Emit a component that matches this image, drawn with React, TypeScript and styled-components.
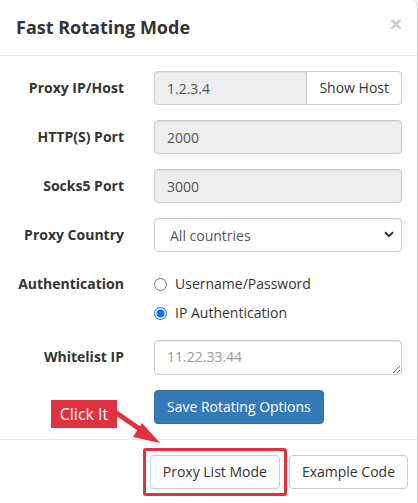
import React from "react";
import styled, { createGlobalStyle } from "styled-components";

const Global = createGlobalStyle`
  html, body { margin: 0; padding: 0; background: #fff; }
  body { font-family: "Open Sans", "Liberation Sans", sans-serif; font-size: 14px; color: #333; }
  * { box-sizing: border-box; }
`;

const Modal = styled.div`
  position: relative;
  width: 418px;
  height: 503px;
  overflow: hidden;
  background: #fff;
  border-right: 1px solid rgba(0, 0, 0, 0.2);
  border-top-right-radius: 6px;
`;

const Header = styled.div`
  display: flex;
  justify-content: space-between;
  align-items: flex-start;
  padding: 15px 15px 15px 16px;
  border-bottom: 1px solid #e5e5e5;
  height: 56px;
`;

const Title = styled.h4`
  margin: 0;
  font-size: 18px;
  font-weight: 700;
  line-height: 25px;
  color: #333;
`;

const Close = styled.button`
  border: 0;
  background: transparent;
  padding: 0;
  margin-top: -2px;
  font-family: "Liberation Sans", sans-serif;
  font-size: 21px;
  font-weight: 700;
  line-height: 1;
  color: #000;
  opacity: 0.2;
  cursor: pointer;
`;

const Body = styled.div`
  padding: 15px 15px 15px 16px;
`;

const FormRow = styled.div<{ $last?: boolean }>`
  display: grid;
  grid-template-columns: 108px 1fr;
  column-gap: 30px;
  margin-bottom: ${(p) => (p.$last ? "0" : "15px")};
`;

const Label = styled.label`
  text-align: right;
  font-weight: 700;
  font-size: 14px;
  line-height: 20px;
  padding-top: 7px;
  color: #333;
`;

const Control = styled.input`
  width: 100%;
  height: 34px;
  padding: 6px 12px;
  font-family: inherit;
  font-size: 14px;
  line-height: 20px;
  color: #555;
  background: #eee;
  border: 1px solid #ccc;
  border-radius: 4px;
  box-shadow: inset 0 1px 1px rgba(0, 0, 0, 0.075);
  outline: none;
`;

const InputGroup = styled.div`
  display: flex;
  & > ${Control} {
    border-radius: 4px 0 0 4px;
    flex: 1;
    min-width: 0;
  }
`;

const Button = styled.button<{ $primary?: boolean; $highlighted?: boolean; $attached?: boolean }>`
  position: relative;
  height: 34px;
  padding: 6px 12px;
  font-family: inherit;
  font-size: 14px;
  line-height: 20px;
  white-space: nowrap;
  cursor: pointer;
  color: ${(p) => (p.$primary ? "#fff" : "#333")};
  background: ${(p) => (p.$primary ? "#337ab7" : "#fff")};
  border: 1px solid ${(p) => (p.$primary ? "#2e6da4" : "#ccc")};
  border-radius: ${(p) => (p.$attached ? "0 4px 4px 0" : "4px")};
  margin-left: ${(p) => (p.$attached ? "-1px" : "0")};
  outline: none;
  &::after {
    content: "";
    display: ${(p) => (p.$highlighted ? "block" : "none")};
    position: absolute;
    inset: -8px;
    border: 3px solid #e03140;
    border-radius: 3px;
    pointer-events: none;
  }
`;

const SelectWrap = styled.div`
  position: relative;
`;

const Select = styled.select`
  width: 100%;
  height: 34px;
  padding: 6px 12px 6px 15px;
  font-family: inherit;
  font-size: 14px;
  color: #555;
  background: #fff;
  border: 1px solid #ccc;
  border-radius: 4px;
  box-shadow: inset 0 1px 1px rgba(0, 0, 0, 0.075);
  appearance: none;
  outline: none;
`;

const Chevron = styled.svg`
  position: absolute;
  right: 8px;
  top: 13px;
  pointer-events: none;
`;

const RadioList = styled.div`
  display: flex;
  flex-direction: column;
  padding-bottom: 2px;
`;

const RadioOption = styled.label<{ $first?: boolean }>`
  display: flex;
  align-items: center;
  gap: 8px;
  line-height: 20px;
  font-size: 14px;
  color: #333;
  padding-top: ${(p) => (p.$first ? "7px" : "0")};
  margin-top: ${(p) => (p.$first ? "0" : "9px")};
  input {
    margin: 0;
    width: 13px;
    height: 13px;
  }
`;

const TextArea = styled.textarea`
  width: 100%;
  height: 35px;
  padding: 6px 12px;
  font-family: inherit;
  font-size: 14px;
  line-height: 20px;
  color: #555;
  background: #fff;
  border: 1px solid #ccc;
  border-radius: 4px;
  box-shadow: inset 0 1px 1px rgba(0, 0, 0, 0.075);
  resize: vertical;
  display: block;
  outline: none;
  &::placeholder { color: #999; }
`;

const Footer = styled.div`
  display: flex;
  justify-content: flex-end;
  gap: 9px;
  padding: 15px 9px 15px 15px;
  border-top: 1px solid #e5e5e5;
`;

const Callout = styled.div`
  position: absolute;
  left: 51px;
  top: 400px;
  width: 66px;
  height: 28px;
  background: #e03140;
  color: #fff;
  font-size: 16px;
  line-height: 28px;
  text-align: center;
`;

const Arrow = styled.svg`
  position: absolute;
  left: 112px;
  top: 406px;
`;

export default function App() {
  return (
    <>
      <Global />
      <Modal>
        <Header>
          <Title>Fast Rotating Mode</Title>
          <Close aria-label="Close">×</Close>
        </Header>
        <Body>
          <FormRow>
            <Label>Proxy IP/Host</Label>
            <InputGroup>
              <Control readOnly value="1.2.3.4" />
              <Button $attached>Show Host</Button>
            </InputGroup>
          </FormRow>
          <FormRow>
            <Label>HTTP(S) Port</Label>
            <Control readOnly value="2000" />
          </FormRow>
          <FormRow>
            <Label>Socks5 Port</Label>
            <Control readOnly value="3000" />
          </FormRow>
          <FormRow>
            <Label>Proxy Country</Label>
            <SelectWrap>
              <Select defaultValue="all">
                <option value="all">All countries</option>
              </Select>
              <Chevron width="10" height="7" viewBox="0 0 10 7">
                <path d="M1 1.2 L5 5.2 L9 1.2" fill="none" stroke="#333" strokeWidth="2" />
              </Chevron>
            </SelectWrap>
          </FormRow>
          <FormRow>
            <Label>Authentication</Label>
            <RadioList>
              <RadioOption $first>
                <input type="radio" name="auth" />
                Username/Password
              </RadioOption>
              <RadioOption>
                <input type="radio" name="auth" defaultChecked />
                IP Authentication
              </RadioOption>
            </RadioList>
          </FormRow>
          <FormRow>
            <Label>Whitelist IP</Label>
            <TextArea placeholder="11.22.33.44" />
          </FormRow>
          <FormRow $last>
            <div />
            <div>
              <Button $primary>Save Rotating Options</Button>
            </div>
          </FormRow>
        </Body>
        <Footer>
          <Button $highlighted>Proxy List Mode</Button>
          <Button>Example Code</Button>
        </Footer>
        <Callout>Click It</Callout>
        <Arrow width="52" height="40" viewBox="0 0 52 40">
          <line x1="3" y1="6" x2="32" y2="26" stroke="#e03140" strokeWidth="5" />
          <polygon points="30,17 21,31 48,37" fill="#e03140" />
        </Arrow>
      </Modal>
    </>
  );
}
